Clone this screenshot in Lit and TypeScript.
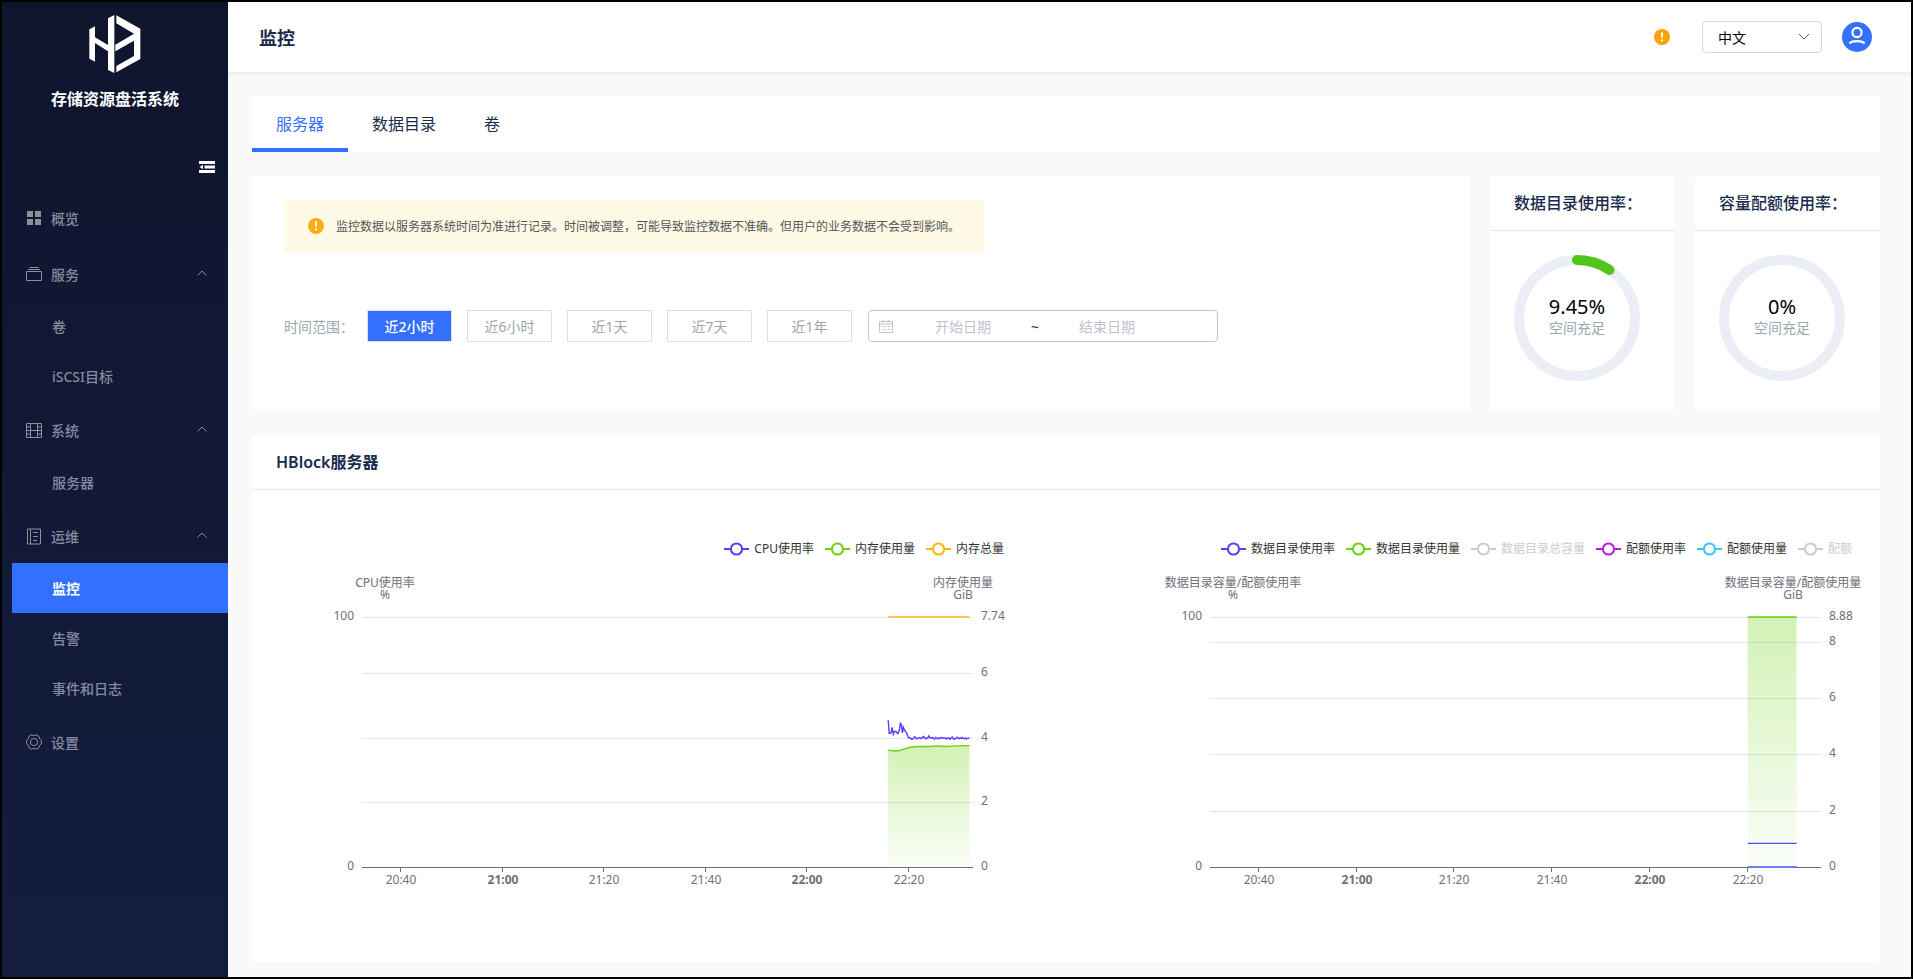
import { LitElement, html, svg, css, nothing } from "lit";
import { customElement, property, state } from "lit/decorators.js";
import { classMap } from "lit/directives/class-map.js";

interface Series {
  name: string;
  color: string;
  lineColor?: string;
  axis?: "left" | "right";
  points?: [number, number][];
  area?: boolean;
  off?: boolean;
}

interface ChartData {
  leftName: string;
  rightName: string;
  rightNameShift: number;
  rightMax: number;
  rightTicks: number[];
  from: number;
  to: number;
  series: Series[];
}

/* Times are minutes after 20:00. */
const cpuSamples = [
  58.7, 53.5, 53.5, 53.9, 55.9, 53.1, 54.1, 54.3, 54.2, 53.4, 53.5, 54.8, 57.5,
  56.9, 53.6, 55.9, 54.8, 54.2, 53.8, 52.6, 51.7, 51.8, 51.6, 51.1, 51.2, 51.5,
  52.1, 51.8, 51.3, 51.5, 51.6, 51.8, 51.4, 51.5, 52.0, 52.2, 51.6, 51.2, 51.7,
  51.6, 52.4, 51.8, 51.6, 51.7, 51.9, 51.2, 51.3, 51.9, 51.5, 51.3, 51.7, 51.4,
  51.8, 51.6, 51.7, 51.5, 51.7, 51.3, 51.5, 51.4, 51.6, 51.1, 51.5, 52.1, 51.3,
  51.1, 51.5, 51.4, 51.9, 51.6, 51.3, 51.7, 51.5, 51.8, 51.4, 51.3, 51.6, 51.2,
  51.5, 51.6, 51.5,
];

const serverChart: ChartData = {
  leftName: "CPU使用率",
  rightName: "内存使用量",
  rightNameShift: 10,
  rightMax: 7.74,
  rightTicks: [2, 4, 6, 7.74],
  from: 32.3,
  to: 152.6,
  series: [
    {
      name: "CPU使用率",
      color: "#5b3df5",
      axis: "left",
      points: cpuSamples.map((v, i) => [135.9 + i * 0.2, v] as [number, number]),
    },
    {
      name: "内存使用量",
      color: "#6cd20a",
      axis: "right",
      area: true,
      points: [
        [135.9, 3.62], [137.2, 3.59], [138, 3.6], [139, 3.65], [140, 3.7],
        [141, 3.72], [142.5, 3.73], [144, 3.73], [145.5, 3.75], [147, 3.73],
        [149, 3.75], [151.9, 3.76],
      ],
    },
    {
      name: "内存总量",
      color: "#fab60f",
      axis: "right",
      points: [[135.9, 7.74], [151.9, 7.74]],
    },
  ],
};

const directoryChart: ChartData = {
  leftName: "数据目录容量/配额使用率",
  rightName: "数据目录容量/配额使用量",
  rightNameShift: 28,
  rightMax: 8.88,
  rightTicks: [2, 4, 6, 8, 8.88],
  from: 30,
  to: 155,
  series: [
    { name: "数据目录使用率", color: "#5b3df5", axis: "left", points: [[140, 9.45], [150, 9.45]] },
    { name: "数据目录使用量", color: "#6cd20a", axis: "right", area: true, points: [[140, 8.88], [150, 8.88]] },
    { name: "数据目录总容量", color: "#cccccc", off: true },
    { name: "配额使用率", color: "#b51fdc", axis: "left", points: [[140, 0], [150, 0]] },
    { name: "配额使用量", color: "#38c6fa", lineColor: "#4f93f0", axis: "right", points: [[140, 0], [150, 0]] },
    { name: "配额", color: "#cccccc", off: true },
  ],
};

const warningIcon = html`<svg width="16" height="16" viewBox="0 0 16 16" aria-hidden="true">
  <circle cx="8" cy="8" r="8" fill="currentColor" />
  <path d="M6.900 3.500h2.200l-.4 5.600H7.300z" fill="#fff" />
  <circle cx="8" cy="11.400" r="1.100" fill="#fff" />
</svg>`;

@customElement("line-chart")
export class LineChart extends LitElement {
  static styles = css`
    :host {
      display: block;
      min-width: 0;
    }
    .legend {
      display: flex;
      justify-content: flex-end;
      gap: 11px;
      padding-right: 4px;
    }
    .key {
      display: flex;
      align-items: center;
      gap: 5px;
      border: 0;
      padding: 0;
      background: none;
      font: inherit;
      font-size: 12px;
      line-height: 20px;
      color: #333;
      white-space: nowrap;
      cursor: pointer;
    }
    .key.off {
      color: #ccc;
    }
    .plot {
      display: block;
      width: 100%;
      overflow: visible;
    }
    text {
      font-size: 12px;
      fill: #6e7079;
    }
    .hour {
      font-weight: 700;
    }
    .start {
      text-anchor: start;
    }
    .middle {
      text-anchor: middle;
    }
    .end {
      text-anchor: end;
    }
  `;

  @property({ attribute: false }) data!: ChartData;
  @property() gradient = "area";
  @state() private width = 732;

  private observer = new ResizeObserver(([entry]) => {
    this.width = Math.round(entry.contentRect.width);
  });

  connectedCallback() {
    super.connectedCallback();
    this.observer.observe(this);
  }

  disconnectedCallback() {
    this.observer.disconnect();
    super.disconnectedCallback();
  }

  private renderSeries(s: Series, x: (t: number) => number, top: number, bottom: number) {
    if (s.off || !s.points) return nothing;
    const max = s.axis === "left" ? 100 : this.data.rightMax;
    const y = (v: number) => bottom - (v / max) * (bottom - top);
    const line = s.points.map(([t, v]) => `${x(t).toFixed(1)},${y(v).toFixed(1)}`).join(" ");
    const first = x(s.points[0][0]).toFixed(1);
    const last = x(s.points[s.points.length - 1][0]).toFixed(1);
    return svg`
      ${s.area
        ? svg`<polygon points="${first},${bottom} ${line} ${last},${bottom}" fill="url(#${this.gradient})" />`
        : nothing}
      <polyline points=${line} fill="none" stroke=${s.lineColor ?? s.color} stroke-width="1.400" />`;
  }

  render() {
    const d = this.data;
    const left = 86;
    const right = this.width - 35;
    const top = 58;
    const bottom = 308;
    const x = (t: number) => left + ((t - d.from) / (d.to - d.from)) * (right - left);
    const yRight = (v: number) => Math.round(bottom - (v / d.rightMax) * (bottom - top));
    const times = [40, 60, 80, 100, 120, 140];
    const clock = (t: number) => `${20 + Math.floor(t / 60)}:${String(t % 60).padStart(2, "0")}`;
    return html`
      <div class="legend">
        ${d.series.map(
          (s) => html`<button class=${classMap({ key: true, off: !!s.off })} type="button">
            <svg width="25" height="14" viewBox="0 0 25 14" aria-hidden="true">
              <path d="M0 7h25" stroke=${s.color} stroke-width="2" />
              <circle cx="12.500" cy="7" r="5.600" fill="#fff" stroke=${s.color} stroke-width="2" />
            </svg>
            <span>${s.name}</span>
          </button>`
        )}
      </div>
      <svg class="plot" height="330" role="img" aria-label=${`${d.leftName} ${d.rightName}`}>
        <defs>
          <linearGradient id=${this.gradient} x1="0" y1="0" x2="0" y2="1">
            <stop offset="0" stop-color="#6cd20a" stop-opacity=".3" />
            <stop offset="1" stop-color="#6cd20a" stop-opacity=".03" />
          </linearGradient>
        </defs>
        <text class="middle" x=${left + 23} y="28">${d.leftName}</text>
        <text class="middle" x=${left + 23} y="40">%</text>
        <text class="middle" x=${right - d.rightNameShift} y="28">${d.rightName}</text>
        <text class="middle" x=${right - d.rightNameShift} y="40">GiB</text>
        ${d.rightTicks.map(
          (v) => svg`
            <path d="M${left} ${yRight(v) + 0.5}H${right}" stroke="#e0e6f1" />
            <text class="start" x=${right + 8} y=${yRight(v) + 3}>${v}</text>`
        )}
        <text class="start" x=${right + 8} y=${bottom + 3}>0</text>
        <text class="end" x=${left - 8} y=${top + 3}>100</text>
        <text class="end" x=${left - 8} y=${bottom + 3}>0</text>
        <path d="M${left} ${bottom + 0.5}H${right}" stroke="#6e7079" />
        ${times.map(
          (t) => svg`
            <path d="M${Math.round(x(t)) - 0.5} ${bottom}v5" stroke="#6e7079" />
            <text class=${t % 60 === 0 ? "middle hour" : "middle"} x=${Math.round(x(t))} y=${bottom + 17}>${clock(t)}</text>`
        )}
        ${d.series.map((s) => this.renderSeries(s, x, top, bottom))}
      </svg>
    `;
  }
}

@customElement("usage-card")
export class UsageCard extends LitElement {
  static styles = css`
    :host {
      display: flex;
      flex-direction: column;
      background: #fff;
      border-radius: 4px;
    }
    .title {
      margin: 0;
      padding: 0 24px;
      font-size: 16px;
      font-weight: 500;
      line-height: 54px;
      color: #172b4d;
      border-bottom: 1px solid #e8e8e8;
      white-space: nowrap;
    }
    .ring {
      display: grid;
      justify-content: start;
      place-items: center;
      padding: 24px 24px 0;
    }
    .ring > * {
      grid-area: 1 / 1;
    }
    .text {
      padding-bottom: 4px;
    }
    .value {
      font-size: 20px;
      line-height: 24px;
      color: #000;
      text-align: center;
    }
    .note {
      font-size: 14px;
      line-height: 18px;
      color: #9ca5b0;
      text-align: center;
    }
  `;

  @property() label = "";
  @property() note = "";
  @property({ type: Number }) percent = 0;

  render() {
    return html`
      <h2 class="title">${this.label}</h2>
      <div class="ring">
        <svg width="126" height="126" viewBox="0 0 126 126" aria-hidden="true">
          <circle cx="63" cy="63" r="58" fill="none" stroke="#ebeef5" stroke-width="10" />
          ${this.percent > 0
            ? svg`<circle cx="63" cy="63" r="58" fill="none" stroke="#52c41a" stroke-width="10"
                stroke-linecap="round" pathLength="100" stroke-dasharray="${this.percent} 100"
                transform="rotate(-90 63 63)" />`
            : nothing}
        </svg>
        <div class="text">
          <div class="value">${this.percent}%</div>
          <div class="note">${this.note}</div>
        </div>
      </div>
    `;
  }
}

const gridIcon = svg`<path fill="currentColor" d="M1 1h6v6H1zM9 1h6v6H9zM1 9h6v6H1zM9 9h6v6H9z" />`;
const stackIcon = svg`<path fill="none" stroke="currentColor" d="M.5 5.500h15v9H.5zM2 3.500h12M3.500 1.500h9" />`;
const filmIcon = svg`<path fill="none" stroke="currentColor" d="M.5 1.500h15v14H.5zM4.500 1.500v14M11.500 1.500v14M4.500 8.500h7M.5 5h4M.5 8.500h4M.5 12h4M11.500 5h4M11.500 8.500h4M11.500 12h4" />`;
const bookIcon = svg`<path fill="none" stroke="currentColor" d="M1.500 1h13v15h-13zM4.500 1v15M7 4.500h5M7 8.500h5M7 12.500h4" />`;
const gearIcon = svg`<g fill="none" stroke="currentColor" stroke-linejoin="round"><path d="M5.500.8Q8 2.600 10.500.8L13 2.300Q12.800 5.200 15.400 6.300V9.700Q12.800 10.800 13 13.700L10.500 15.200Q8 13.400 5.500 15.200L3 13.700Q3.200 10.800.6 9.700V6.300Q3.200 5.200 3 2.300z" /><circle cx="8" cy="8" r="3.600" /></g>`;

const menu = [
  { label: "概览", icon: gridIcon },
  { label: "服务", icon: stackIcon, children: ["卷", "iSCSI目标"] },
  { label: "系统", icon: filmIcon, children: ["服务器"] },
  { label: "运维", icon: bookIcon, children: ["监控", "告警", "事件和日志"] },
  { label: "设置", icon: gearIcon },
];

@customElement("side-menu")
export class SideMenu extends LitElement {
  static styles = css`
    :host {
      display: flex;
      flex-direction: column;
      background: linear-gradient(#0f152d, #141d40);
      color: #858a9f;
    }
    .logo {
      display: block;
      margin: 13px auto 0;
    }
    .name {
      margin: 16px 0 0;
      font-size: 16px;
      line-height: 20px;
      font-weight: 700;
      color: #fff;
      text-align: center;
    }
    .collapse {
      align-self: flex-end;
      display: flex;
      margin: 52px 13px 0 0;
      border: 0;
      padding: 0;
      background: none;
      color: #fff;
      cursor: pointer;
    }
    .list {
      list-style: none;
      margin: 0;
      padding: 0;
    }
    .top {
      margin-top: 16px;
    }
    .group,
    .item {
      display: flex;
      align-items: center;
      box-sizing: border-box;
      width: 100%;
      border: 0;
      background: none;
      color: inherit;
      font: inherit;
      font-size: 14px;
      font-weight: 500;
      text-align: left;
      text-decoration: none;
      cursor: pointer;
    }
    .group {
      gap: 9px;
      height: 56px;
      padding: 1px 21px 0 24px;
    }
    .icon {
      color: #8e9097;
    }
    .label {
      flex: 1;
    }
    .item {
      height: 50px;
      padding: 0 0 0 50px;
    }
    .item.active {
      width: auto;
      margin-left: 10px;
      padding-left: 40px;
      background: #3370ff;
      color: #fff;
      font-weight: 700;
    }
  `;

  @property() active = "";

  render() {
    return html`
      <svg class="logo" width="52" height="58" viewBox="0 0 154 174" aria-hidden="true">
        <g fill="#fff">
          <path d="M0 43 17 34V67L56 90V10L75 0V174L56 165V109L17 84V140L0 131z" />
          <path d="M81 1 153 41V132L81 172V153L134 123V77L78 109V89L134 56 81 25z" />
        </g>
      </svg>
      <p class="name">存储资源盘活系统</p>
      <button class="collapse" type="button" aria-label="收起菜单">
        <svg width="16" height="12" viewBox="0 0 16 12">
          <path fill="currentColor" d="M0 0h16v3H0zM5.500 4.500H16v3H5.500zM0 9h16v3H0zM4 3.800v4.400L.5 6z" />
        </svg>
      </button>
      <nav>
        <ul class="list top">
          ${menu.map(
            (m) => html`<li>
              <button class="group" type="button">
                <svg class="icon" width="16" height="16" viewBox="0 0 16 16" overflow="visible" aria-hidden="true">${m.icon}</svg>
                <span class="label">${m.label}</span>
                ${m.children
                  ? html`<svg width="10" height="8" viewBox="0 0 10 8" aria-hidden="true">
                      <path d="M.5 5.500 5 1l4.500 4.500" fill="none" stroke="currentColor" />
                    </svg>`
                  : nothing}
              </button>
              ${m.children
                ? html`<ul class="list">
                    ${m.children.map(
                      (c) => html`<li>
                        <a class=${classMap({ item: true, active: c === this.active })} href="#">${c}</a>
                      </li>`
                    )}
                  </ul>`
                : nothing}
            </li>`
          )}
        </ul>
      </nav>
    `;
  }
}

@customElement("app-root")
export class AppRoot extends LitElement {
  static styles = css`
    :host {
      display: grid;
      grid-template-columns: 226px minmax(0, 1fr);
      box-sizing: border-box;
      min-height: 100vh;
      border: 2px solid #000;
      background: #f9f9f9;
      font-family: "Noto Sans", "Noto Sans CJK SC", sans-serif;
      font-size: 14px;
      color: #172b4d;
    }
    .main {
      display: flex;
      flex-direction: column;
      min-width: 0;
    }
    .header {
      display: flex;
      align-items: center;
      box-sizing: border-box;
      height: 70px;
      padding: 0 39px 0 31px;
      background: #fff;
      box-shadow: 0 1px 4px rgba(0, 21, 41, 0.08);
    }
    .title {
      flex: 1;
      margin: 0;
      font-size: 18px;
      font-weight: 700;
    }
    .notice {
      display: flex;
      margin-right: 32px;
      border: 0;
      padding: 0;
      background: none;
      color: #ffa20a;
    }
    .language {
      display: grid;
      align-items: center;
      width: 120px;
      margin-right: 20px;
    }
    .language > * {
      grid-area: 1 / 1;
    }
    .language select {
      appearance: none;
      height: 32px;
      border: 1px solid #d9d9d9;
      border-radius: 4px;
      padding: 0 32px 0 15px;
      background: #fff;
      font: inherit;
      color: #000;
    }
    .language svg {
      justify-self: end;
      margin-right: 12px;
      pointer-events: none;
    }
    .avatar {
      display: flex;
      border: 0;
      padding: 0;
      background: none;
    }
    .content {
      flex: 1;
      display: flex;
      flex-direction: column;
      gap: 24px;
      padding: 24px 31px 15px 24px;
    }
    .tabs {
      display: flex;
      background: #fff;
      border-radius: 4px 4px 0 0;
    }
    .tab {
      height: 56px;
      box-sizing: border-box;
      border: 0;
      border-bottom: 4px solid transparent;
      padding: 2px 24px 0;
      background: none;
      font: inherit;
      font-size: 16px;
      color: inherit;
      cursor: pointer;
    }
    .tab.active {
      color: #3370ff;
      border-bottom-color: #3370ff;
    }
    .row {
      display: grid;
      grid-template-columns: minmax(0, 1fr) 185px 185px;
      gap: 20px;
      min-height: 235px;
    }
    .filters {
      background: #fff;
      border-radius: 4px;
      padding: 24px 32px;
    }
    .alert {
      display: flex;
      align-items: center;
      gap: 12px;
      box-sizing: border-box;
      max-width: 700px;
      height: 52px;
      padding: 0 24px;
      background: #fffae6;
      font-size: 12px;
      color: #555;
      white-space: nowrap;
    }
    .alert svg {
      color: #fdac1a;
    }
    .range {
      display: flex;
      align-items: center;
      margin-top: 58px;
    }
    .range-label {
      width: 83px;
      color: #9ca5b0;
    }
    .presets {
      display: flex;
      gap: 15px;
      margin-right: 16px;
    }
    .preset {
      width: 85px;
      height: 32px;
      border: 1px solid #dcdfe6;
      padding: 0;
      background: #fff;
      font: inherit;
      color: #9ca5b0;
      cursor: pointer;
    }
    .preset.active {
      background: #3370ff;
      color: #fff;
      font-weight: 500;
    }
    .dates {
      display: flex;
      align-items: center;
      box-sizing: border-box;
      width: 350px;
      height: 32px;
      border: 1px solid #c0c4cc;
      border-radius: 4px;
      padding: 0 46px 0 10px;
      color: #303133;
    }
    .dates svg {
      margin-right: 6px;
      color: #c0c4cc;
    }
    .separator {
      width: 16px;
      text-align: center;
    }
    .dates input {
      flex: 1;
      min-width: 0;
      border: 0;
      padding: 0;
      background: none;
      font: inherit;
      text-align: center;
      outline: none;
    }
    .dates input::placeholder {
      color: #c0c4cc;
      opacity: 1;
    }
    .panel {
      flex: 1;
      background: #fff;
      border-radius: 4px;
    }
    .panel-title {
      margin: 0;
      padding: 0 24px;
      font-size: 16px;
      font-weight: 600;
      line-height: 54px;
      border-bottom: 1px solid #e8e8e8;
    }
    .charts {
      display: grid;
      grid-template-columns: minmax(0, 1fr) minmax(0, 1fr);
      gap: 116px;
      padding: 49px 24px 0;
    }
  `;

  @state() private tab = "服务器";
  @state() private preset = "近2小时";

  connectedCallback() {
    super.connectedCallback();
    this.lang = "zh-CN";
  }

  render() {
    return html`
      <side-menu active="监控"></side-menu>
      <div class="main">
        <header class="header">
          <h1 class="title">监控</h1>
          <button class="notice" type="button" aria-label="提示">${warningIcon}</button>
          <div class="language">
            <select aria-label="语言">
              <option>中文</option>
            </select>
            <svg width="12" height="8" viewBox="0 0 12 8" aria-hidden="true">
              <path d="M1 1l5 5 5-5" fill="none" stroke="#60666e" />
            </svg>
          </div>
          <button class="avatar" type="button" aria-label="用户">
            <svg width="30" height="30" viewBox="0 0 30 30">
              <circle cx="15" cy="15" r="15" fill="#3370ff" />
              <circle cx="15" cy="10.500" r="4.600" fill="none" stroke="#fff" stroke-width="2.200" />
              <path d="M7.500 21.500c2-3.200 13-3.200 15 0" fill="none" stroke="#fff" stroke-width="2.400" />
            </svg>
          </button>
        </header>
        <main class="content">
          <div class="tabs" role="tablist">
            ${["服务器", "数据目录", "卷"].map(
              (t) => html`<button
                class=${classMap({ tab: true, active: t === this.tab })}
                type="button"
                role="tab"
                @click=${() => (this.tab = t)}
              >${t}</button>`
            )}
          </div>
          <div class="row">
            <section class="filters">
              <div class="alert" role="alert">
                ${warningIcon}
                <span>监控数据以服务器系统时间为准进行记录。时间被调整，可能导致监控数据不准确。但用户的业务数据不会受到影响。</span>
              </div>
              <div class="range">
                <span class="range-label">时间范围：</span>
                <div class="presets">
                  ${["近2小时", "近6小时", "近1天", "近7天", "近1年"].map(
                    (p) => html`<button
                      class=${classMap({ preset: true, active: p === this.preset })}
                      type="button"
                      @click=${() => (this.preset = p)}
                    >${p}</button>`
                  )}
                </div>
                <div class="dates">
                  <svg width="14" height="14" viewBox="0 0 14 14" aria-hidden="true">
                    <path fill="none" stroke="currentColor" d="M.5 2.500h13v11H.5zM.5 5h13M4 .5v3M10 .5v3M3 7.500h2m1 0h2m1 0h2M3 10.500h2m1 0h2m1 0h2" />
                  </svg>
                  <input type="text" placeholder="开始日期" aria-label="开始日期" />
                  <span class="separator">~</span>
                  <input type="text" placeholder="结束日期" aria-label="结束日期" />
                </div>
              </div>
            </section>
            <usage-card label="数据目录使用率：" percent="9.45" note="空间充足"></usage-card>
            <usage-card label="容量配额使用率：" percent="0" note="空间充足"></usage-card>
          </div>
          <section class="panel">
            <h2 class="panel-title">HBlock服务器</h2>
            <div class="charts">
              <line-chart .data=${serverChart}></line-chart>
              <line-chart .data=${directoryChart}></line-chart>
            </div>
          </section>
        </main>
      </div>
    `;
  }
}
